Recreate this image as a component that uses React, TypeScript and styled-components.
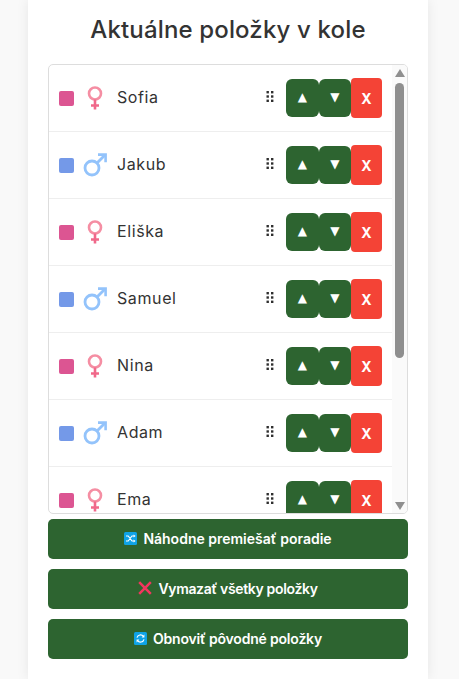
import styled, { createGlobalStyle } from 'styled-components';

const GlobalStyle = createGlobalStyle`
  html, body {
    margin: 0;
    padding: 0;
    background: #f9f9f9;
    overflow: hidden;
  }
  * {
    box-sizing: border-box;
  }
`;

type Gender = 'f' | 'm';

const items: { name: string; gender: Gender }[] = [
  { name: 'Sofia', gender: 'f' },
  { name: 'Jakub', gender: 'm' },
  { name: 'Eliška', gender: 'f' },
  { name: 'Samuel', gender: 'm' },
  { name: 'Nina', gender: 'f' },
  { name: 'Adam', gender: 'm' },
  { name: 'Ema', gender: 'f' },
];

const FemaleIcon = () => (
  <svg width="22" height="24" viewBox="0 0 22 24" fill="none">
    <circle cx="11" cy="7.5" r="6" stroke="#f58ea3" strokeWidth="2.6" />
    <path d="M11 13.5V23.5" stroke="#f0688a" strokeWidth="2.6" />
    <path d="M7 19.5H15" stroke="#f0688a" strokeWidth="2.6" />
  </svg>
);

const MaleIcon = () => (
  <svg width="24" height="24" viewBox="0 0 24 24" fill="none">
    <circle cx="9" cy="15" r="7" stroke="#93c3fb" strokeWidth="2.8" />
    <path d="M14 10L22 2" stroke="#93c3fb" strokeWidth="2.8" />
    <path d="M15 1.6H22.6V9.2" stroke="#93c3fb" strokeWidth="2.6" />
  </svg>
);

const GripIcon = () => (
  <svg width="8" height="11" viewBox="0 0 8 11" fill="#2f2f2f">
    <rect x="0.5" y="0" width="2.4" height="2.4" />
    <rect x="5" y="0" width="2.4" height="2.4" />
    <rect x="0.5" y="4.3" width="2.4" height="2.4" />
    <rect x="5" y="4.3" width="2.4" height="2.4" />
    <rect x="0.5" y="8.6" width="2.4" height="2.4" />
    <rect x="5" y="8.6" width="2.4" height="2.4" />
  </svg>
);

const ShuffleIcon = () => (
  <svg width="13" height="13" viewBox="0 0 13 13">
    <rect width="13" height="13" rx="1.5" fill="#0fa3e6" />
    <path
      d="M2 4H4.2L8 9H10M2 9H4.2L8 4H10"
      fill="none"
      stroke="#fff"
      strokeWidth="1.1"
    />
    <path d="M9.6 2.6L11.6 4L9.6 5.4ZM9.6 7.6L11.6 9L9.6 10.4Z" fill="#fff" />
  </svg>
);

const CrossIcon = () => (
  <svg width="14" height="14" viewBox="0 0 14 14">
    <path d="M1.2 1.2L12.8 12.8M12.8 1.2L1.2 12.8" stroke="#f3365f" strokeWidth="2.5" />
  </svg>
);

const RefreshIcon = () => (
  <svg width="13" height="13" viewBox="0 0 13 13">
    <rect width="13" height="13" rx="1.5" fill="#0fa3e6" />
    <path
      d="M3 5.6A3.6 3.6 0 0 1 9.4 4.4M10 7.4A3.6 3.6 0 0 1 3.6 8.6"
      fill="none"
      stroke="#fff"
      strokeWidth="1.2"
    />
    <path d="M10.4 2.6V5.4H7.6ZM2.6 10.4V7.6H5.4Z" fill="#fff" />
  </svg>
);

const App = () => {
  return (
    <Page>
      <GlobalStyle />
      <Card>
        <Title>Aktuálne položky v kole</Title>
        <List>
          <Rows>
            {items.map((item) => (
              <Row key={item.name}>
                <Swatch $gender={item.gender} />
                <GenderSlot>{item.gender === 'f' ? <FemaleIcon /> : <MaleIcon />}</GenderSlot>
                <Name>{item.name}</Name>
                <Handle>
                  <GripIcon />
                </Handle>
                <MoveButton>▲</MoveButton>
                <MoveButton>▼</MoveButton>
                <RemoveButton>X</RemoveButton>
              </Row>
            ))}
          </Rows>
          <ScrollBar>
            <ScrollArrow viewBox="0 0 10 8">
              <path d="M5 0L10 8H0Z" />
            </ScrollArrow>
            <ScrollThumb />
            <ScrollArrow viewBox="0 0 10 8">
              <path d="M0 0H10L5 8Z" />
            </ScrollArrow>
          </ScrollBar>
        </List>
        <ActionButton $first>
          <ShuffleIcon />
          Náhodne premiešať poradie
        </ActionButton>
        <ActionButton $tracking="-0.35px">
          <CrossIcon />
          Vymazať všetky položky
        </ActionButton>
        <ActionButton $tracking="-0.2px">
          <RefreshIcon />
          Obnoviť pôvodné položky
        </ActionButton>
      </Card>
    </Page>
  );
};

const Page = styled.div`
  display: flex;
  justify-content: center;
  width: 459px;
  height: 679px;
  padding-right: 3px;
  font-family: 'Inter', 'Liberation Sans', sans-serif;
  color: #333;
`;

const Card = styled.div`
  display: flex;
  flex-direction: column;
  width: 400px;
  height: 679px;
  padding: 12px 20px 0;
  background: #fff;
  box-shadow: 0 0 12px rgba(0, 0, 0, 0.08);
`;

const Title = styled.h2`
  margin: 0 0 16px;
  height: 36px;
  font-size: 24px;
  line-height: 36px;
  font-weight: 500;
  letter-spacing: 0.15px;
  text-align: center;
  color: #333;
`;

const List = styled.div`
  display: flex;
  height: 450px;
  flex: none;
  overflow: hidden;
  border: 1px solid #ddd;
  border-radius: 5px;
`;

const Rows = styled.div`
  flex: 1;
  min-width: 0;
  overflow: hidden;
`;

const ScrollBar = styled.div`
  display: flex;
  flex-direction: column;
  align-items: center;
  width: 15px;
  flex: none;
  padding: 4px 0 3px;
  background: #fafafa;
`;

const ScrollArrow = styled.svg`
  width: 10px;
  height: 8px;
  flex: none;
  fill: #8f8f8f;
`;

const ScrollThumb = styled.div`
  width: 9px;
  height: 275px;
  margin: 6px 0 auto;
  border-radius: 5px;
  background: #8f8f8f;
`;

const Row = styled.div`
  display: flex;
  align-items: center;
  height: 67px;
  padding: 0 10px;
  border-bottom: 1px solid #eee;
`;

const Swatch = styled.span<{ $gender: Gender }>`
  width: 15px;
  height: 15px;
  flex: none;
  border-radius: 2px;
  background: ${(p) => (p.$gender === 'f' ? '#dc5592' : '#7499e8')};
`;

const GenderSlot = styled.span`
  display: flex;
  justify-content: center;
  width: 24px;
  margin: 0 10px 0 9px;
  flex: none;
`;

const Name = styled.span`
  flex: 1;
  margin-bottom: 2px;
  font-size: 16px;
  letter-spacing: 0.6px;
  color: #333;
`;

const Handle = styled.span`
  display: flex;
  margin-right: 12px;
  padding-bottom: 4px;
`;

const MoveButton = styled.button`
  display: flex;
  align-items: center;
  justify-content: center;
  width: 32.5px;
  height: 38px;
  padding: 0 0 2px;
  border: none;
  border-radius: 6px;
  background: #2d6430;
  color: #fff;
  font-family: 'DejaVu Sans', sans-serif;
  font-size: 12px;
`;

const RemoveButton = styled.button`
  width: 31px;
  height: 40px;
  padding: 0;
  border: none;
  border-radius: 4px;
  background: #f44336;
  color: #fff;
  font-family: 'Inter', sans-serif;
  font-size: 14px;
  font-weight: 700;
`;

const ActionButton = styled.button<{ $first?: boolean; $tracking?: string }>`
  display: flex;
  align-items: center;
  justify-content: center;
  gap: 6px;
  flex: none;
  width: 360px;
  height: 40px;
  margin-top: ${(p) => (p.$first ? '5px' : '10px')};
  padding: 0 0 2px;
  border: none;
  border-radius: 5px;
  background: #2d6430;
  color: #fff;
  font-family: 'Inter', sans-serif;
  font-size: 14px;
  font-weight: 600;
  letter-spacing: ${(p) => p.$tracking ?? '0'};
`;

export default App;
